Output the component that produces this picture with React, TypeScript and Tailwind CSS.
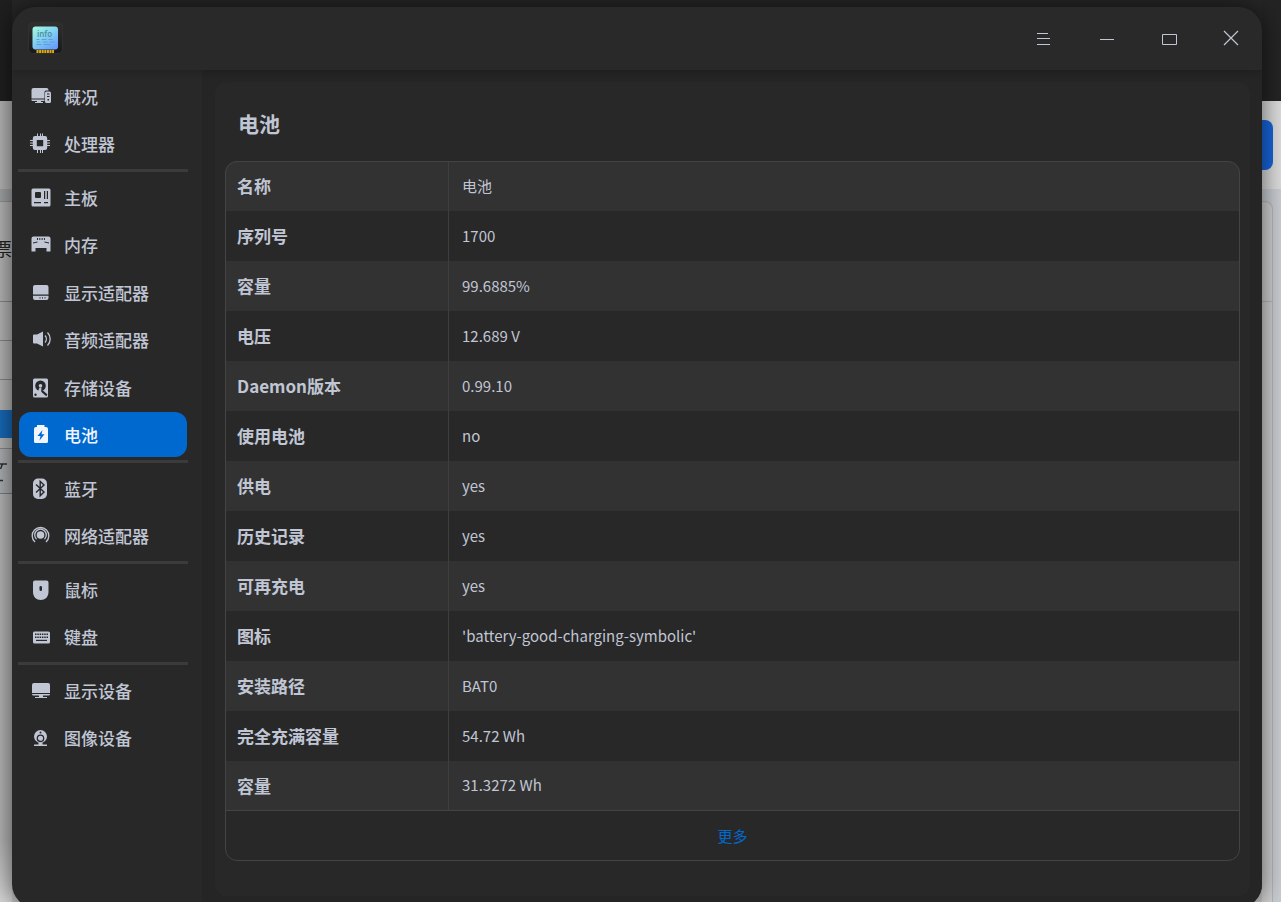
import { useState } from 'react';
import type { ReactNode } from 'react';
import clsx from 'clsx';

const HOLE = '#282828';

const icons: Record<string, ReactNode> = {
  overview: (
    <>
      <path d="M3.500 2h13a2 2 0 0 1 2 2v.5H16A1.500 1.500 0 0 0 14.500 6v6.500h-13V4a2 2 0 0 1 2-2Z" />
      <path d="M1.500 13.500h13V15h-12a1 1 0 0 1-1-1.500ZM7 15h4v1h2v1H5v-1h2Z" />
      <path fillRule="evenodd" d="M16.500 5.500h3A1.500 1.500 0 0 1 21 7v8.500a1.500 1.500 0 0 1-1.500 1.500h-3a1.500 1.500 0 0 1-1.500-1.500V7a1.500 1.500 0 0 1 1.500-1.500ZM17 7.500v1h2.500v-1ZM17 10v1h2.500v-1ZM17.500 13v1.500h1.500V13Z" />
    </>
  ),
  cpu: (
    <>
      <path d="M7 .5h1V3H7zM10 .5h1V3h-1zM12 .5h1V3h-1zM7 17h1v3H7zM10 17h1v3h-1zM12 17h1v3h-1zM0 7h3v1H0zM0 9.500h3v1H0zM0 12h3v1H0zM17 7h3v1h-3zM17 9.500h3v1h-3zM17 12h3v1h-3z" />
      <path fillRule="evenodd" d="M5 3h10a2.200 2.200 0 0 1 2.200 2.200v9.600A2.200 2.200 0 0 1 15 17H5a2.200 2.200 0 0 1-2.200-2.200V5.200A2.200 2.200 0 0 1 5 3Zm1.800 4v6.200h6.400V7Z" />
    </>
  ),
  board: (
    <>
      <rect x="1.500" y="1.500" width="19" height="18" rx="1.500" />
      <rect x="5" y="5" width="6" height="6" rx="1" fill={HOLE} />
      <path d="M14 4h1.200v8H14zM16.800 4H18v8h-1.200zM4 15h7v1.300H4zM14 15h4v1.300h-4z" fill={HOLE} />
    </>
  ),
  memory: (
    <>
      <path d="M3.500 2.500h15a2 2 0 0 1 2 2v13h-4V14h-11v3.500h-4v-13a2 2 0 0 1 2-2Z" />
      <path d="M7 4h1v2H7zM9.300 4h1v2h-1zM11.600 4h1v2h-1zM13.900 4h1v2h-1zM3 8.500l4.500-1V8.500L3 9.500zM19 8.500l-4.500-1V8.500l4.500 1z" fill={HOLE} />
    </>
  ),
  gpu: (
    <>
      <path d="M5 3h11.500a2 2 0 0 1 2 2v7.500H3V5a2 2 0 0 1 2-2Z" />
      <path fillRule="evenodd" d="M3 13.800h15.500V16a2 2 0 0 1-2 2H5a2 2 0 0 1-2-2Zm6.500 1.500v1.200h1v-1.200Zm2.500 0v1.200h1v-1.200Zm2.500 0v1.200h1v-1.200Z" />
    </>
  ),
  audio: (
    <>
      <path d="M4 5.500h3L13 2.500v15l-6-3H4a1 1 0 0 1-1-1v-7a1 1 0 0 1 1-1Z" />
      <path d="M15 6.500c1.800 2 1.800 5 0 7M17.500 3.500c3.600 3.800 3.600 9.200 0 13" fill="none" stroke="currentColor" strokeWidth="1.300" />
    </>
  ),
  storage: (
    <>
      <rect x="3" y="1.500" width="15" height="19" rx="1.500" />
      <circle cx="10.500" cy="8.800" r="5.300" fill={HOLE} />
      <circle cx="10.500" cy="8.800" r="1.800" />
      <path d="M10.500 13.500h2.500l4.500 4-1.300 1.800-4-3.500Z" fill={HOLE} />
      <path d="M9.500 10.500 8 14.500l3 .5.500-4.500Z" />
      <circle cx="5.500" cy="17.800" r="1.200" fill={HOLE} />
    </>
  ),
  battery: (
    <path fillRule="evenodd" d="M7 1h7.500v2h1.500a2 2 0 0 1 2 2v12.500a1.500 1.500 0 0 1-1.500 1.500h-11A1.500 1.500 0 0 1 4 17.500V5a2 2 0 0 1 2-2h1Zm5.500 5L7.500 12h3l-1 4.500 5-6.200h-3Z" />
  ),
  bluetooth: (
    <>
      <rect x="3" y="0.500" width="14" height="20.500" rx="5" />
      <path d="m6 6.500 8 7.500-3.800 3.800V3.300L14 7l-8 7.500" fill="none" stroke={HOLE} strokeWidth="1.400" />
    </>
  ),
  network: (
    <>
      <circle cx="10.500" cy="10" r="3.800" />
      <path d="M6.500 14.200a5.800 5.800 0 1 1 8 0M5 17a8.300 8.300 0 1 1 11 0" fill="none" stroke="currentColor" strokeWidth="1.300" />
    </>
  ),
  mouse: (
    <>
      <path d="M5 1.500h11.500a2 2 0 0 1 2 2V13c0 5-3.500 8-7.750 8S3 18 3 13V3.500a2 2 0 0 1 2-2Z" />
      <rect x="9.500" y="7" width="2.500" height="5" rx="1.200" fill={HOLE} />
    </>
  ),
  keyboard: (
    <>
      <rect x="3" y="5.500" width="17" height="12" rx="1.500" />
      <path d="M5 8.200h13M5 11.200h13" fill="none" stroke={HOLE} strokeWidth="1.500" strokeDasharray="1.500 0.800" />
      <path d="M6 13.800h11V15H6z" fill={HOLE} />
    </>
  ),
  display: (
    <>
      <path d="M4 3h14a2 2 0 0 1 2 2v8H2V5a2 2 0 0 1 2-2Z" />
      <path d="M2 14h18a1.500 1.500 0 0 1-1.500 1.500H13v1.500h4v1H5v-1h4v-1.500H3.500A1.500 1.500 0 0 1 2 14Z" />
    </>
  ),
  camera: (
    <>
      <circle cx="10.500" cy="9.500" r="6.500" />
      <circle cx="10.500" cy="11.300" r="3.200" fill="none" stroke={HOLE} strokeWidth="1.300" />
      <circle cx="10.500" cy="5.500" r="1" fill={HOLE} />
      <path d="M8.500 15.500h4v2H17V19H4v-1.500h4.500Z" />
    </>
  ),
};

const groups = [
  [
    { id: 'overview', label: '概况' },
    { id: 'cpu', label: '处理器' },
  ],
  [
    { id: 'board', label: '主板' },
    { id: 'memory', label: '内存' },
    { id: 'gpu', label: '显示适配器' },
    { id: 'audio', label: '音频适配器' },
    { id: 'storage', label: '存储设备' },
    { id: 'battery', label: '电池' },
  ],
  [
    { id: 'bluetooth', label: '蓝牙' },
    { id: 'network', label: '网络适配器' },
  ],
  [
    { id: 'mouse', label: '鼠标' },
    { id: 'keyboard', label: '键盘' },
  ],
  [
    { id: 'display', label: '显示设备' },
    { id: 'camera', label: '图像设备' },
  ],
];

const rows = [
  ['名称', '电池'],
  ['序列号', '1700'],
  ['容量', '99.6885%'],
  ['电压', '12.689 V'],
  ['Daemon版本', '0.99.10'],
  ['使用电池', 'no'],
  ['供电', 'yes'],
  ['历史记录', 'yes'],
  ['可再充电', 'yes'],
  ['图标', "'battery-good-charging-symbolic'"],
  ['安装路径', 'BAT0'],
  ['完全充满容量', '54.72 Wh'],
  ['容量', '31.3272 Wh'],
];

function Logo() {
  return (
    <svg width="36" height="34" viewBox="0 0 36 34" aria-hidden="true">
      <defs>
        <linearGradient id="screen" x1="0" y1="0" x2="0.700" y2="1">
          <stop offset="0" stopColor="#a4fbe0" />
          <stop offset="0.500" stopColor="#86d3f2" />
          <stop offset="1" stopColor="#6aa0fb" />
        </linearGradient>
        <linearGradient id="chip" x1="0" y1="0" x2="0" y2="1">
          <stop offset="0" stopColor="#303030" />
          <stop offset="1" stopColor="#191919" />
        </linearGradient>
      </defs>
      <rect x="0.500" y="1.500" width="34" height="31" rx="4" fill="url(#chip)" stroke="#303030" />
      <rect x="4.500" y="5.500" width="25.500" height="23" rx="3" fill="url(#screen)" />
      <text x="9" y="16" fontSize="8" fontWeight="600" fontFamily="Noto Sans" fill="#4b93a0">
        info
      </text>
      <path d="M8.500 18.500h3M13.500 18.500h5M20.500 18.500h4M8.500 21h4M14.500 21h5M21.500 21h5M8.500 23.500h5M15.500 23.500h7" stroke="#5ba3cf" />
      <path d="M8.500 30.500h17.500" stroke="#e2ac10" strokeWidth="3" strokeDasharray="2 0.600" />
    </svg>
  );
}

function WindowButton({ label, children }: { label: string; children: ReactNode }) {
  return (
    <button aria-label={label} className="flex h-full w-[62px] items-center justify-center hover:bg-white/10">
      <svg width="16" height="16" viewBox="0 0 16 16" fill="none" stroke="#c0c6d4" aria-hidden="true">
        {children}
      </svg>
    </button>
  );
}

// slice of the desktop that stays visible to the left of the window
function LeftEdge() {
  return (
    <div className="flex w-3 flex-col overflow-hidden bg-[linear-gradient(#b4b4b4_840px,#d4d4d4_900px)]">
      <div className="h-[101px] bg-[#1f1f1f]" />
      <div className="h-[88px]" />
      <div className="h-[13px] border-b border-[#8f9091] bg-[#a0a3a5]" />
      <div className="flex h-[100px] items-center justify-end border-b border-[#858585] pb-2 text-lg text-[#222222]">票</div>
      <div className="h-[39px] border-b border-[#858585]" />
      <div className="h-[39px] border-b border-[#858585]" />
      <div className="h-[30px]" />
      <div className="h-[28px] bg-[#1769b8]" />
      <div className="h-[11px] border-b border-[#858585]" />
      <div className="h-[45px] border-b border-[#757c82] bg-[#acaeb0] pt-3.5">
        <svg width="8" height="19" viewBox="0 0 8 19" fill="none" stroke="#2c3036" strokeWidth="1.500" aria-hidden="true">
          <path d="M0 1h7M2.500 1 .5 6M0 17.500h3" />
        </svg>
      </div>
    </div>
  );
}

function RightEdge() {
  return (
    <div className="flex w-[19px] flex-col overflow-hidden bg-[#c8cbd0]">
      <div className="h-[101px] bg-[#242424]" />
      <div className="h-[88px] bg-[#dadada] pt-[19px]">
        <div className="h-[50px] w-[11px] rounded-r-lg bg-[#1764d8]" />
      </div>
      <div className="h-[12px]" />
      <div className="w-[11px] flex-1 rounded-tr-lg border-t border-r border-[#b4b6b8] bg-[#d0d0d0]">
        <div className="h-[100px] border-b border-[#b4b6b8]" />
      </div>
    </div>
  );
}

export default function App() {
  const [active, setActive] = useState('battery');

  return (
    <div className="flex h-screen overflow-hidden bg-[linear-gradient(#262626_101px,#c4c4c4_101px)] font-['Noto_Sans_CJK_SC',sans-serif] text-[#c0c6d4]">
      <LeftEdge />

      <div className="relative mt-[7px] flex h-[calc(100vh-1px)] min-w-0 flex-1 flex-col overflow-hidden rounded-3xl bg-[#282828] shadow-[0_0_24px_rgba(0,0,0,0.6)]">
        <header className="relative flex h-[63px] shrink-0 items-start justify-between bg-[#292929] shadow-[0_2px_8px_rgba(0,0,0,0.2)]">
          <div className="pt-[14px] pl-[16px]">
            <Logo />
          </div>
          <div className="flex h-[62px]">
            <WindowButton label="菜单">
              <path d="M0 3.500h11M0 8.500h13M0 14.500h13" />
            </WindowButton>
            <WindowButton label="最小化">
              <path d="M1 9.500h14" />
            </WindowButton>
            <WindowButton label="最大化">
              <path d="M1.500 4.500h14v10h-14z" />
            </WindowButton>
            <WindowButton label="关闭">
              <path d="m1 1 14 14m0-14-14 14" strokeWidth="1.200" />
            </WindowButton>
          </div>
        </header>

        <div className="flex min-h-0 flex-1">
          <nav className="w-[190px] shrink-0 pt-[3px] pr-[14px] pl-[6px]">
            {groups.map((group, i) => (
              <div key={i}>
                {i > 0 && <hr className="mt-px mb-[2px] h-[3px] border-0 bg-[#3b3b3b]" />}
                <ul className={clsx('mx-px flex flex-col', group.length > 2 ? 'h-[285px]' : 'h-[95px]')}>
                  {group.map((item) => (
                    <li key={item.id} className="flex flex-1 items-start">
                      <button
                        onClick={() => setActive(item.id)}
                        className={clsx(
                          'flex h-[45px] w-full items-center gap-3 rounded-xl pt-[2px] pl-[11px] text-[17px] font-medium',
                          active === item.id ? 'bg-[#0069cf] text-[#f1f6fe]' : 'hover:bg-white/5',
                        )}
                      >
                        <svg width="22" height="22" viewBox="0 0 22 22" fill="currentColor" aria-hidden="true">
                          {icons[item.id]}
                        </svg>
                        {item.label}
                      </button>
                    </li>
                  ))}
                </ul>
              </div>
            ))}
          </nav>

          <main className="min-w-0 flex-1 bg-[#252525] p-3 pl-[13px]">
            <section className="h-full rounded-xl bg-[#282828] px-[10px]">
              <h1 className="flex h-[79px] items-center pt-[4px] pl-[13px] text-[21px] font-bold">电池</h1>
              <div className="overflow-hidden rounded-xl outline outline-1 -outline-offset-1 outline-[#444444]">
                <table className="w-full table-fixed border-separate border-spacing-0 text-left">
                  <tbody>
                    {rows.map(([name, value], i) => (
                      <tr key={i} className="group h-[50px] odd:bg-[#323232]">
                        <th className="w-[224px] border-r border-[#3e3e3e] pl-3 text-[17px] font-bold group-last:border-b group-last:border-b-[#444444]">
                          {name}
                        </th>
                        <td className="border-[#444444] pl-[13px] text-[15px] group-last:border-b">{value}</td>
                      </tr>
                    ))}
                  </tbody>
                </table>
                <button className="h-[50px] w-full text-[15px] text-[#0069cf] hover:underline">更多</button>
              </div>
            </section>
          </main>
        </div>
      </div>

      <RightEdge />
    </div>
  );
}
